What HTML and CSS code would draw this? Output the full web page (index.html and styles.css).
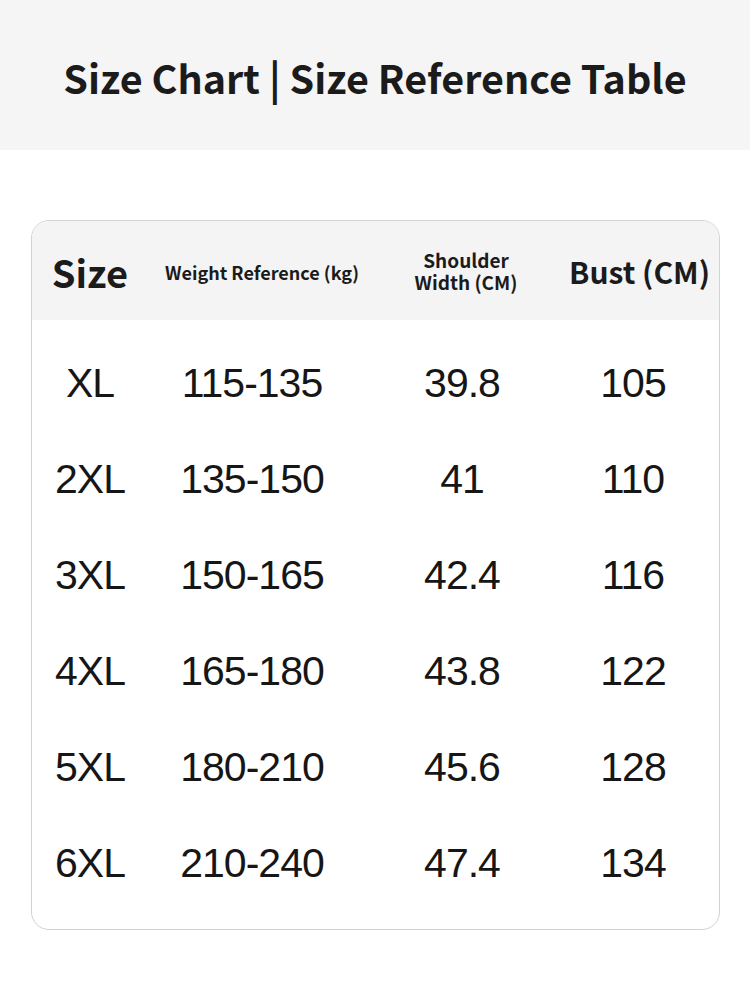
FILE: index.html
```html
<!DOCTYPE html>
<html>
<head>
<meta charset="utf-8">
<link rel="stylesheet" href="styles.css">
</head>
<body>
<header class="banner">
  <h1 class="title">Size Chart | Size Reference Table</h1>
</header>
<main class="content">
  <section class="card">
    <div class="thead">
      <div class="th th-size">Size</div>
      <div class="th th-weight">Weight Reference (kg)</div>
      <div class="th th-shoulder"><span class="line">Shoulder</span><span class="line">Width (CM)</span></div>
      <div class="th th-bust">Bust (CM)</div>
    </div>
    <div class="tbody">
      <div class="row"><span>XL</span><span>115-135</span><span>39.8</span><span>105</span></div>
      <div class="row"><span>2XL</span><span>135-150</span><span>41</span><span>110</span></div>
      <div class="row"><span>3XL</span><span>150-165</span><span>42.4</span><span>116</span></div>
      <div class="row"><span>4XL</span><span>165-180</span><span>43.8</span><span>122</span></div>
      <div class="row"><span>5XL</span><span>180-210</span><span>45.6</span><span>128</span></div>
      <div class="row"><span>6XL</span><span>210-240</span><span>47.4</span><span>134</span></div>
    </div>
  </section>
</main>
</body>
</html>
```
FILE: styles.css
```css
* { box-sizing: border-box; }
html, body { margin: 0; padding: 0; background: #ffffff; }
body { width: 750px; height: 1000px; overflow: hidden; color: #1b1b1b; }

.banner {
  height: 150px;
  background: #f5f5f5;
  display: flex;
  align-items: center;
  justify-content: center;
}
.title {
  margin: 0;
  font-family: "Noto Sans CJK SC", "Noto Sans", sans-serif;
  font-weight: 700;
  font-size: 39.5px;
  color: #1b1b1b;
  padding-top: 2px;
}

.content { padding: 70px 31px 0 31px; }

.card {
  width: 689px;
  height: 710px;
  border: 1px solid #d2d2d2;
  border-radius: 18px;
  overflow: hidden;
  background: #fff;
}

.thead {
  height: 99px;
  background: #f4f4f4;
  display: grid;
  grid-template-columns: 116px 228px 180px 1fr;
  align-items: center;
  font-family: "Noto Sans CJK SC", "Noto Sans", sans-serif;
  font-weight: 700;
  color: #1b1b1b;
}
.th { text-align: center; white-space: nowrap; }
.th-size { font-size: 38px; padding-top: 2px; }
.th-weight { font-size: 18px; padding-top: 2px; }
.th-shoulder {
  font-size: 19px;
  display: flex;
  flex-direction: column;
  align-items: center;
  gap: 0;
}
.th-shoulder .line { display: block; line-height: 22px; height: 22px; }
.th-bust { font-size: 30px; padding-left: 4px; }

.tbody { padding-top: 15px; }
.row {
  height: 96px;
  display: grid;
  grid-template-columns: 116px 208px 212px 130px 1fr;
  align-items: center;
  font-family: "Liberation Sans", Arial, sans-serif;
  font-size: 41px;
  letter-spacing: -1px;
  color: #161616;
}
.row span { text-align: center; }
```
